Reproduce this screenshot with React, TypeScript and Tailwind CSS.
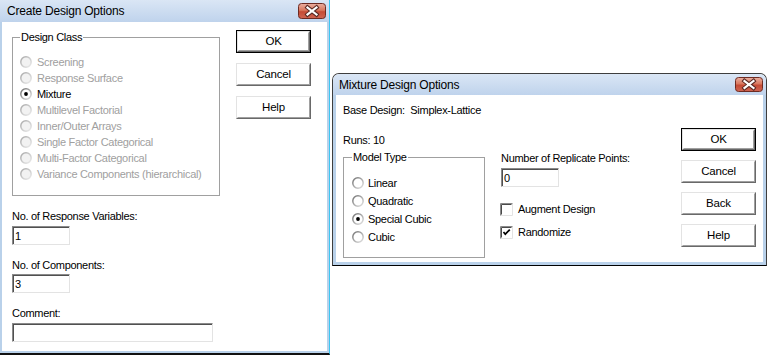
import React from 'react';

type RadioProps = { label: string; checked?: boolean; disabled?: boolean; gap: string; row: string };

function CloseBox({ tall }: { tall?: boolean }) {
  const h = tall ? 16 : 15;
  return (
    <svg width="28" height={h} viewBox={`0 0 28 ${h}`}>
      <defs>
        <linearGradient id={`close-${h}`} x1="0" y1="0" x2="0" y2="1">
          <stop offset="0" stopColor="#eab0a2" />
          <stop offset="0.45" stopColor="#d9785f" />
          <stop offset="0.55" stopColor="#c54b35" />
          <stop offset="1" stopColor="#cf6552" />
        </linearGradient>
      </defs>
      <rect x="0.5" y="0.5" width="27" height={h - 1} rx="3" fill={`url(#close-${h})`} stroke="#6e2b22" />
      <path
        d={`M9.5 ${h / 2 - 3.5} L18.5 ${h / 2 + 3.5} M18.5 ${h / 2 - 3.5} L9.5 ${h / 2 + 3.5}`}
        stroke="#5a2a24"
        strokeWidth="4.2"
        strokeLinecap="square"
      />
      <path
        d={`M9.5 ${h / 2 - 3.5} L18.5 ${h / 2 + 3.5} M18.5 ${h / 2 - 3.5} L9.5 ${h / 2 + 3.5}`}
        stroke="#ffffff"
        strokeWidth="2.2"
        strokeLinecap="square"
      />
    </svg>
  );
}

function RadioDot({ checked, disabled }: { checked?: boolean; disabled?: boolean }) {
  const id = disabled ? 'radio-off' : 'radio-on';
  return (
    <svg width="12" height="12" viewBox="0 0 12 12" className="shrink-0">
      <defs>
        <linearGradient id={id} x1="0" y1="0" x2="1" y2="1">
          <stop offset="0" stopColor={disabled ? '#a8a8a8' : '#707070'} />
          <stop offset="1" stopColor={disabled ? '#ececec' : '#e4e4e4'} />
        </linearGradient>
      </defs>
      <circle cx="6" cy="6" r="5.2" fill={disabled ? '#f2f2f2' : '#ffffff'} stroke={`url(#${id})`} strokeWidth="1.5" />
      {checked && <circle cx="6" cy="6" r="1.9" fill="#000" />}
    </svg>
  );
}

function Radio({ label, checked, disabled, gap, row }: RadioProps) {
  return (
    <div className={`${row} flex items-center ${gap} ${disabled ? 'text-[#a0a0a0]' : 'text-black'}`}>
      <RadioDot checked={checked} disabled={disabled} />
      <span>{label}</span>
    </div>
  );
}

function Check({ label, checked }: { label: string; checked?: boolean }) {
  return (
    <div className="h-[16px] flex items-center gap-[5px]">
      <svg width="13" height="13" viewBox="0 0 13 13" className="shrink-0">
        <rect x="0" y="0" width="13" height="13" fill="#fff" />
        <path d="M12.5 0.5V12.5H0.5" stroke="#e3e3e3" fill="none" />
        <path d="M0.5 12.5V0.5H12.5" stroke="#8a8a8a" fill="none" />
        <path d="M1.5 11.5V1.5H11.5" stroke="#4a4a4a" fill="none" />
        {checked && <path d="M3.5 6 L5.3 8.2 L9.8 3.6" stroke="#000" strokeWidth="1.7" fill="none" />}
      </svg>
      <span>{label}</span>
    </div>
  );
}

function Field({ value, w }: { value?: string; w: string }) {
  return (
    <div className={`${w} h-[19px] border-t border-l border-t-[#8a8a8a] border-l-[#8a8a8a] border-r border-b border-r-[#e3e3e3] border-b-[#e3e3e3]`}>
      <div className="h-full border-t border-l border-t-[#505050] border-l-[#505050] bg-white flex items-center pl-[1px]">
        {value}
      </div>
    </div>
  );
}

function Btn({ label, primary }: { label: string; primary?: boolean }) {
  return (
    <div className={`w-[75px] h-[23px] ${primary ? 'border border-black' : ''}`}>
      <div className="h-full border border-t-[#e3e3e3] border-l-[#e3e3e3] border-r-[#696969] border-b-[#696969] bg-white">
        <div className="h-full border border-t-white border-l-white border-r-[#a0a0a0] border-b-[#a0a0a0] flex items-center justify-center text-[11.5px] tracking-[-0.2px]">
          {label}
        </div>
      </div>
    </div>
  );
}

function TitleBar({ title, left }: { title: string; left?: boolean }) {
  return (
    <div
      className={`${left ? 'h-[22px] pl-[7px]' : 'h-[21px] pl-[6px]'} shrink-0 flex items-center justify-between pr-[3px] bg-gradient-to-b from-[#dae6f5] to-[#bfd3ec]`}
    >
      <span className="text-[12px] leading-[14px] tracking-[-0.2px]">{title}</span>
      <CloseBox tall={left} />
    </div>
  );
}

function CreateDialog() {
  const classes = [
    { label: 'Screening', disabled: true },
    { label: 'Response Surface', disabled: true },
    { label: 'Mixture', checked: true },
    { label: 'Multilevel Factorial', disabled: true },
    { label: 'Inner/Outer Arrays', disabled: true },
    { label: 'Single Factor Categorical', disabled: true },
    { label: 'Multi-Factor Categorical', disabled: true },
    { label: 'Variance Components (hierarchical)', disabled: true },
  ];

  return (
    <div className="absolute left-0 top-0 w-[330px] h-[355px] flex flex-col border-r border-r-[#3cc6f2] border-b-2 border-b-[#111]">
      <TitleBar title="Create Design Options" left />
      <div className="flex-1 flex bg-white border-l-2 border-r-2 border-b-2 border-[#b9d1ea] pl-[10px] pt-[8px]">
        <div className="w-[208px] flex flex-col">
          <fieldset className="mt-[1px] h-[165px] border border-[#a0a0a0] pl-[7px] pt-[10px]">
            <legend className="px-[1px]">Design Class</legend>
            {classes.map((c) => (
              <Radio key={c.label} label={c.label} checked={c.checked} disabled={c.disabled} gap="gap-[5px]" row="h-[16px]" />
            ))}
          </fieldset>
          <div className="mt-[14px]">No. of Response Variables:</div>
          <div className="mt-[3px]">
            <Field value="1" w="w-[58px]" />
          </div>
          <div className="mt-[14px]">No. of Components:</div>
          <div className="mt-[2px]">
            <Field value="3" w="w-[58px]" />
          </div>
          <div className="mt-[14px]">Comment:</div>
          <div className="mt-[3px]">
            <Field w="w-[201px]" />
          </div>
        </div>
        <div className="ml-[16px] flex flex-col gap-[10px]">
          <Btn label="OK" primary />
          <Btn label="Cancel" />
          <Btn label="Help" />
        </div>
      </div>
    </div>
  );
}

function MixtureDialog() {
  const models = [
    { label: 'Linear' },
    { label: 'Quadratic' },
    { label: 'Special Cubic', checked: true },
    { label: 'Cubic' },
  ];

  return (
    <div className="absolute left-[332px] top-[73px] w-[435px] h-[193px] flex flex-col rounded-t-[7px] border border-[#3e3e3e] border-b-black overflow-hidden">
      <TitleBar title="Mixture Design Options" />
      <div className="flex-1 flex flex-col bg-white border-l-[3px] border-r-[3px] border-b-[3px] border-[#b9d1ea] pl-[7px] pr-[7px] pt-[9px]">
        <div className="whitespace-pre">Base Design:  Simplex-Lattice</div>
        <div className="mt-[11px] flex justify-between">
          <div className="flex flex-col">
            <div className="mt-[6px]">Runs: 10</div>
            <div className="mt-[4px] flex">
              <fieldset className="w-[142px] h-[107px] border border-[#a0a0a0] pl-[8px] pt-[10px]">
                <legend className="px-[1px]">Model Type</legend>
                {models.map((m) => (
                  <Radio key={m.label} label={m.label} checked={m.checked} gap="gap-[4px]" row="h-[18px]" />
                ))}
              </fieldset>
              <div className="ml-[16px] flex flex-col">
                <div className="mt-[1px]">Number of Replicate Points:</div>
                <div className="mt-[3px]">
                  <Field value="0" w="w-[58px]" />
                </div>
                <div className="mt-[14px] -ml-[1px]">
                  <Check label="Augment Design" />
                </div>
                <div className="mt-[7px] -ml-[1px]">
                  <Check label="Randomize" checked />
                </div>
              </div>
            </div>
          </div>
          <div className="flex flex-col gap-[9px]">
            <Btn label="OK" primary />
            <Btn label="Cancel" />
            <Btn label="Back" />
            <Btn label="Help" />
          </div>
        </div>
      </div>
    </div>
  );
}

export default function App() {
  return (
    <div className="relative w-[773px] h-[355px] overflow-hidden bg-white font-['Liberation_Sans',Arial,sans-serif] text-[11px] leading-[13px] tracking-[-0.3px] text-black">
      <CreateDialog />
      <MixtureDialog />
    </div>
  );
}
